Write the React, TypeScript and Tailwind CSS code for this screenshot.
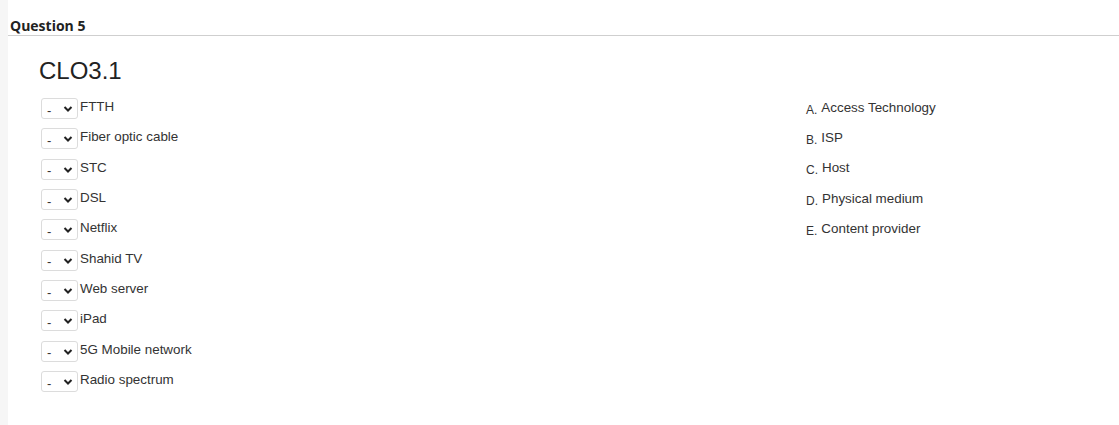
import React from "react";

const items = [
  "FTTH",
  "Fiber optic cable",
  "STC",
  "DSL",
  "Netflix",
  "Shahid TV",
  "Web server",
  "iPad",
  "5G Mobile network",
  "Radio spectrum",
];

const answers = [
  { letter: "A.", text: "Access Technology" },
  { letter: "B.", text: "ISP" },
  { letter: "C.", text: "Host" },
  { letter: "D.", text: "Physical medium" },
  { letter: "E.", text: "Content provider" },
];

function FakeSelect() {
  return (
    <div className="relative flex h-[21px] w-[37px] items-center rounded-[3px] border border-[#dcdcdc] bg-white pl-[5px] text-[13px] leading-none text-[#333]">
      <span className="mt-[3px]">-</span>
      <svg
        className="absolute right-[4px] top-[6px]"
        width="10"
        height="8"
        viewBox="0 0 10 8"
        fill="none"
      >
        <path d="M1.5 2 L5 5.5 L8.5 2" stroke="#222" strokeWidth="2" />
      </svg>
    </div>
  );
}

export default function App() {
  return (
    <div className="flex h-[425px] w-[1119px] bg-white font-['Liberation_Sans',Arial,sans-serif]">
      <div className="w-2 shrink-0 bg-[#f6f6f6]" />
      <div className="flex-1">
        {/* Header */}
        <div className="border-b border-[#cfcfcf] pl-[2px] pt-[17px] pb-[1px]">
          <h3 className="font-['Open_Sans',sans-serif] text-[14px] font-bold leading-[17px] text-[#222]">
            Question 5
          </h3>
        </div>

        <div className="pl-[31px] pt-[20px]">
          <h2 className="text-[24px] leading-[29px] text-[#222]">CLO3.1</h2>

          <div className="mt-[7px] flex">
            {/* Matching items */}
            <div className="w-[767px] shrink-0">
              {items.map((label) => (
                <div key={label} className="flex h-[30.33px] items-center pl-[2px]">
                  <div className="mt-[3px]">
                    <FakeSelect />
                  </div>
                  <span className="ml-[2px] text-[13.4px] text-[#333]">{label}</span>
                </div>
              ))}
            </div>

            {/* Answers */}
            <div>
              {answers.map((a) => (
                <div key={a.letter} className="flex h-[30.33px] items-center">
                  <span className="mt-[1px] text-[13.4px] text-[#333]">
                    <span className="relative top-[2px] mr-[4px] text-[12px]">{a.letter}</span>
                    {a.text}
                  </span>
                </div>
              ))}
            </div>
          </div>
        </div>
      </div>
    </div>
  );
}
